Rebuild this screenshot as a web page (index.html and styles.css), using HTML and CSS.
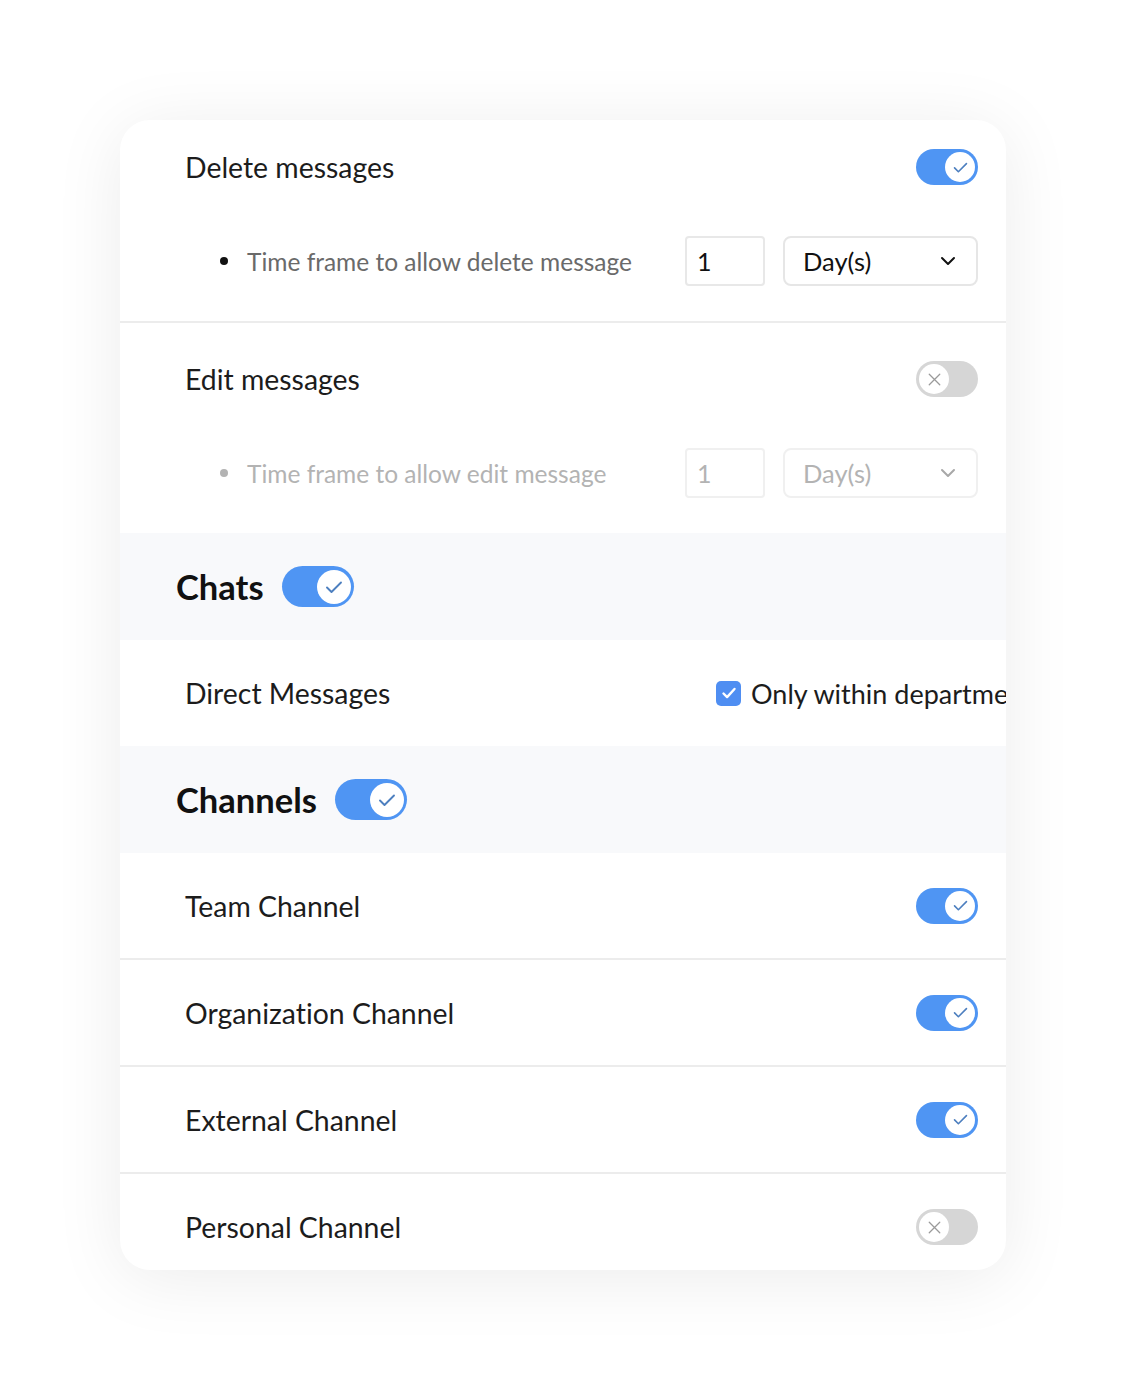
FILE: index.html
```html
<!DOCTYPE html>
<html lang="en">
<head>
  <meta charset="UTF-8" />
  <meta name="viewport" content="width=device-width, initial-scale=1.0"/>
  <title>Messaging Permissions</title>
  <link rel="stylesheet" href="styles.css">
</head>
<body>
  <div class="card">

    <div class="setting">
      <div class="setting-head">
        <span class="setting-title">Delete messages</span>
        <span class="toggle on"><span class="knob"><svg viewBox="0 0 20 20"><path d="M3 10.5l4.5 4.5L17 5.5"/></svg></span></span>
      </div>
      <div class="setting-sub">
        <span class="sub-label">Time frame to allow delete message</span>
        <span class="num-box">1</span>
        <span class="select-box">Day(s)<svg viewBox="0 0 20 20"><path d="M4 7l6 6 6-6"/></svg></span>
      </div>
    </div>

    <div class="setting disabled">
      <div class="setting-head">
        <span class="setting-title">Edit messages</span>
        <span class="toggle off"><span class="knob"><svg viewBox="0 0 20 20"><path d="M3 3l14 14M17 3L3 17"/></svg></span></span>
      </div>
      <div class="setting-sub">
        <span class="sub-label">Time frame to allow edit message</span>
        <span class="num-box">1</span>
        <span class="select-box">Day(s)<svg viewBox="0 0 20 20"><path d="M4 7l6 6 6-6"/></svg></span>
      </div>
    </div>

    <div class="group-head">
      <span class="group-title">Chats</span>
      <span class="toggle on big"><span class="knob"><svg viewBox="0 0 20 20"><path d="M3 10.5l4.5 4.5L17 5.5"/></svg></span></span>
    </div>

    <div class="row">
      <span class="row-title dm-label">Direct Messages</span>
      <span class="check-group">
        <span class="checkbox"><svg viewBox="0 0 20 20"><path d="M4.5 10.5l3.6 3.6L15.5 6"/></svg></span>
        Only within department
      </span>
    </div>

    <div class="group-head">
      <span class="group-title">Channels</span>
      <span class="toggle on big"><span class="knob"><svg viewBox="0 0 20 20"><path d="M3 10.5l4.5 4.5L17 5.5"/></svg></span></span>
    </div>

    <div class="row line">
      <span class="row-title">Team Channel</span>
      <span class="toggle on"><span class="knob"><svg viewBox="0 0 20 20"><path d="M3 10.5l4.5 4.5L17 5.5"/></svg></span></span>
    </div>
    <div class="row line">
      <span class="row-title">Organization Channel</span>
      <span class="toggle on"><span class="knob"><svg viewBox="0 0 20 20"><path d="M3 10.5l4.5 4.5L17 5.5"/></svg></span></span>
    </div>
    <div class="row line">
      <span class="row-title">External Channel</span>
      <span class="toggle on"><span class="knob"><svg viewBox="0 0 20 20"><path d="M3 10.5l4.5 4.5L17 5.5"/></svg></span></span>
    </div>
    <div class="row">
      <span class="row-title">Personal Channel</span>
      <span class="toggle off"><span class="knob"><svg viewBox="0 0 20 20"><path d="M3 3l14 14M17 3L3 17"/></svg></span></span>
    </div>

  </div>
</body>
</html>
```

FILE: styles.css
```css
body {
  font-family: Lato, "Open Sans", sans-serif;
  font-variant-ligatures: no-common-ligatures;
  background: #fff;
  margin: 0;
  padding: 120px;
  color: #1c1c1c;
}

.card {
  background: white;
  border-radius: 30px;
  box-shadow: 0 8px 70px rgba(0, 0, 0, 0.08);
  height: 1150px;
  overflow: hidden;
}

/* toggle switches */
.toggle {
  display: inline-flex;
  align-items: center;
  width: 62px;
  height: 36px;
  border-radius: 18px;
  padding: 0 3px;
  box-sizing: border-box;
  flex-shrink: 0;
}

.toggle.on {
  background: #4f95f3;
  justify-content: flex-end;
}

.toggle.off {
  background: #d6d6d6;
  justify-content: flex-start;
}

.knob {
  width: 30px;
  height: 30px;
  border-radius: 50%;
  background: white;
  display: flex;
  align-items: center;
  justify-content: center;
}

.knob svg {
  width: 17px;
  height: 17px;
  fill: none;
  stroke-width: 1.9;
  stroke-linecap: round;
  stroke-linejoin: round;
}

.toggle.on .knob svg {
  stroke: #4d7fbf;
}

.toggle.off .knob svg {
  stroke: #9a9a9a;
  width: 15px;
  height: 15px;
  stroke-width: 1.7;
}

.toggle.big {
  width: 72px;
  height: 41px;
  border-radius: 21px;
}

.toggle.big .knob {
  width: 34px;
  height: 34px;
}

.toggle.big .knob svg {
  width: 20px;
  height: 20px;
}

/* message settings with a sub option */
.setting {
  padding: 25px 28px 35px 65px;
  border-bottom: 2px solid #ececec;
}

.setting.disabled {
  padding-top: 34px;
  border-bottom: none;
}

.setting-head {
  height: 44px;
  display: flex;
  align-items: center;
  justify-content: space-between;
}

.setting-title,
.row-title {
  font-size: 28.4px;
}

.setting-sub {
  margin-top: 47px;
  height: 50px;
  display: flex;
  align-items: center;
  padding-left: 35px;
}

.sub-label {
  flex: 1;
  font-size: 24.5px;
  color: #6a6a6a;
  display: flex;
  align-items: center;
}

.sub-label::before {
  content: "";
  width: 8px;
  height: 8px;
  border-radius: 50%;
  background: #111;
  margin-right: 19px;
}

.num-box {
  width: 80px;
  height: 50px;
  box-sizing: border-box;
  border: 2px solid #e8e8e8;
  border-radius: 4px;
  padding-left: 10px;
  display: flex;
  align-items: center;
  font-size: 25px;
  color: #111;
  margin-right: 18px;
}

.select-box {
  width: 195px;
  height: 50px;
  box-sizing: border-box;
  border: 2px solid #e6e6e6;
  border-radius: 8px;
  padding: 0 18px 0 18px;
  display: flex;
  align-items: center;
  justify-content: space-between;
  font-size: 25.5px;
  color: #111;
}

.select-box svg {
  width: 20px;
  height: 20px;
  fill: none;
  stroke: #111;
  stroke-width: 2;
  stroke-linecap: round;
  stroke-linejoin: round;
}

.disabled .sub-label,
.disabled .num-box,
.disabled .select-box {
  color: #b3b3b3;
}

.disabled .sub-label::before {
  background: #b3b3b3;
}

.disabled .num-box,
.disabled .select-box {
  border-color: #f0f0f0;
}

.disabled .select-box svg {
  stroke: #a8a8a8;
}

/* group headers: Chats, Channels */
.group-head {
  height: 107px;
  background: #f8f9fb;
  display: flex;
  align-items: center;
  padding-left: 56px;
  gap: 18px;
}

.group-title {
  font-size: 34.5px;
  font-weight: 700;
  color: #111;
}

/* plain rows */
.row {
  height: 106px;
  display: flex;
  align-items: center;
  justify-content: space-between;
  padding: 0 28px 0 65px;
}

.row.line {
  height: 105px;
  border-bottom: 2px solid #ececec;
}

.dm-label {
  width: 531px;
  flex-shrink: 0;
}

.check-group {
  display: flex;
  align-items: center;
  gap: 10px;
  font-size: 27px;
  white-space: nowrap;
  flex-shrink: 0;
  margin-right: auto;
}

.checkbox {
  width: 25px;
  height: 25px;
  border-radius: 5px;
  background: #4f8ef2;
  display: flex;
  align-items: center;
  justify-content: center;
}

.checkbox svg {
  width: 20px;
  height: 20px;
  fill: none;
  stroke: white;
  stroke-width: 2.4;
  stroke-linecap: round;
  stroke-linejoin: round;
}
```
